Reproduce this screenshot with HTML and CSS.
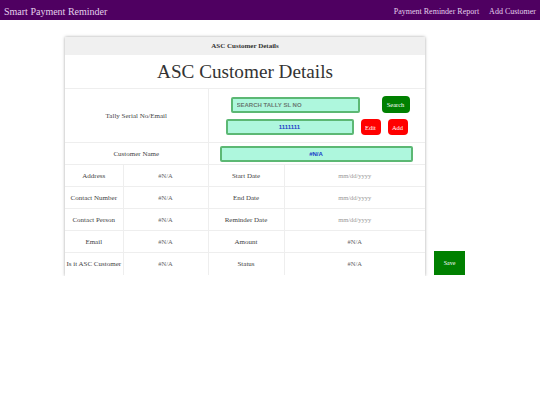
FILE: index.html
```html
<!DOCTYPE html>
<html lang="en">
<head>
  <meta charset="UTF-8" />
  <title>Smart Payment Reminder</title>
  <meta name="viewport" content="width=device-width, initial-scale=1.0" />
  <link rel="stylesheet" href="styles.css">
</head>
<body>

<!-- Top Nav -->
<div class="navbar">
  <div class="brand">Smart Payment Reminder</div>
  <div class="nav-links">
    <a href="#">Payment Reminder Report</a>
    <a href="#">Add Customer</a>
  </div>
</div>

<div class="page">
  <!-- Customer Card -->
  <div class="card">
    <div class="card-head">ASC Customer Details</div>
    <h1 class="title">ASC Customer Details</h1>
    <table class="details">
      <colgroup>
        <col class="c1"><col class="c2"><col class="c3"><col class="c4">
      </colgroup>
      <tr class="tally-row">
        <td colspan="2">Tally Serial No/Email</td>
        <td colspan="2">
          <div class="search-line">
            <input type="text" class="field search-field" placeholder="SEARCH TALLY SL NO">
            <button class="btn green">Search</button>
          </div>
          <div class="edit-line">
            <input type="text" class="field value-field" value="1111111">
            <button class="btn red">Edit</button>
            <button class="btn red">Add</button>
          </div>
        </td>
      </tr>
      <tr>
        <td colspan="2">Customer Name</td>
        <td colspan="2"><input type="text" class="field name-field" value="#N/A"></td>
      </tr>
      <tr>
        <td>Address</td><td class="val">#N/A</td>
        <td>Start Date</td><td class="date">mm/dd/yyyy</td>
      </tr>
      <tr>
        <td>Contact Number</td><td class="val">#N/A</td>
        <td>End Date</td><td class="date">mm/dd/yyyy</td>
      </tr>
      <tr>
        <td>Contact Person</td><td class="val">#N/A</td>
        <td>Reminder Date</td><td class="date">mm/dd/yyyy</td>
      </tr>
      <tr>
        <td>Email</td><td class="val">#N/A</td>
        <td>Amount</td><td class="val">#N/A</td>
      </tr>
      <tr>
        <td>Is it ASC Customer</td><td class="val">#N/A</td>
        <td>Status</td><td class="val">#N/A</td>
      </tr>
    </table>
  </div>

  <button class="save-btn">Save</button>
</div>

</body>
</html>
```

FILE: styles.css
```css
* {
  margin: 0; padding: 0; box-sizing: border-box;
  font-family: 'Liberation Serif', 'Times New Roman', serif;
}

body {
  background: white;
  width: 540px;
}

.navbar {
  height: 20px;
  background: #4f0061;
  display: flex;
  align-items: center;
  justify-content: space-between;
  padding: 3px 4px 0 4px;
  color: #e4d0ec;
}

.brand { font-size: 10px; }

.nav-links {
  display: flex;
  gap: 10px;
}

.nav-links a {
  color: #e4d0ec;
  text-decoration: none;
  font-size: 8px;
}

.page {
  display: flex;
  align-items: flex-end;
  padding: 17px 0 0 65px;
}

.card {
  width: 360px;
  background: white;
  box-shadow: 0 0 3px rgba(0,0,0,0.35);
  padding-bottom: 1px;
}

.card-head {
  height: 18px;
  line-height: 18px;
  background: #f0f0f0;
  text-align: center;
  font-size: 7px;
  font-weight: bold;
  color: #333;
}

.title {
  font-weight: normal;
  text-align: center;
  font-size: 19.2px;
  color: #333;
  height: 33px;
  line-height: 33px;
}

.details {
  width: 100%;
  border-collapse: collapse;
  table-layout: fixed;
}

.c1 { width: 58px; }
.c2 { width: 85px; }
.c3 { width: 76px; }

.details td {
  border: 1px solid #eeeeee;
  text-align: center;
  font-size: 7px;
  color: #444;
  height: 22px;
}

.details tr:last-child td { border-bottom: none; }
.details td:first-child { border-left: none; }
.details td:last-child { border-right: none; }

.details .val { color: #666; font-size: 6.5px; }
.details .date { color: #999; font-size: 6.5px; }

.tally-row td { height: 54px; }

.field {
  background: #aef7dd;
  border: 2px solid #5cb874;
  border-radius: 2px;
  height: 16px;
  font-family: 'Liberation Sans', sans-serif;
  font-weight: bold;
  font-size: 6px;
  outline: none;
}

.search-line, .edit-line {
  display: flex;
  align-items: center;
}

.search-line { padding-left: 22px; }
.edit-line { padding-left: 17px; margin-top: 6px; }

.search-field {
  width: 129px;
  padding-left: 4px;
  color: #555;
}

.search-field::placeholder { color: #6a7a72; }

.value-field {
  width: 128px;
  text-align: center;
  color: #1a3cc8;
}

.name-field {
  width: 193px;
  margin-left: 11px;
  text-align: center;
  color: #1a3cc8;
  display: block;
}

.btn {
  color: white;
  border: none;
  border-radius: 4px;
  font-size: 6.5px;
  height: 16px;
  cursor: pointer;
}

.btn.green {
  background: #008000;
  width: 28px;
  margin-left: 22px;
  height: 17px;
}

.btn.red {
  background: #ff0000;
  width: 20px;
  margin-left: 7px;
}

.save-btn {
  width: 31px;
  height: 24px;
  margin-left: 9px;
  margin-bottom: 1px;
  background: #008000;
  color: white;
  border: none;
  font-size: 6px;
}
```
